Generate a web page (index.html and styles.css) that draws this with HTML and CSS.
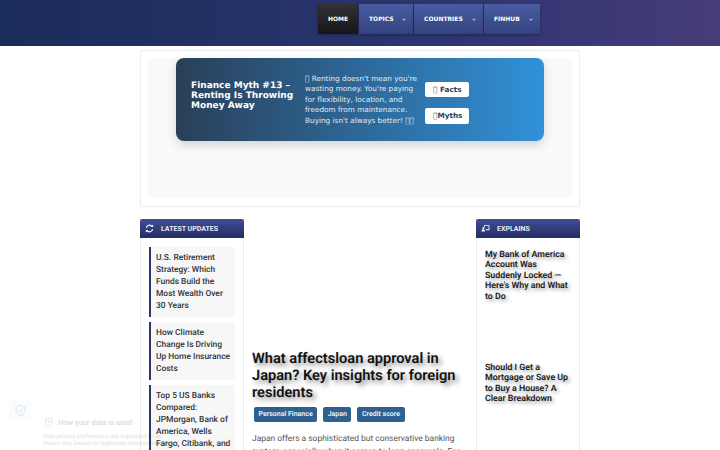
FILE: index.html
```html
<!DOCTYPE html>
<html lang="en">
<head>
  <meta charset="UTF-8">
  <meta name="viewport" content="width=device-width, initial-scale=1.0">
  <title>What affects loan approval in Japan?</title>
  <link rel="stylesheet" href="styles.css">
</head>
<body>
  <header class="site-header">
    <nav class="main-nav">
      <a class="nav-item nav-home" href="#">HOME</a>
      <a class="nav-item nav-topics" href="#">TOPICS <svg class="caret" viewBox="0 0 8 6" fill="none" stroke="#fff" stroke-width="1.600"><path d="M1 1.500l3 3 3-3"/></svg></a>
      <a class="nav-item nav-countries" href="#">COUNTRIES <svg class="caret" viewBox="0 0 8 6" fill="none" stroke="#fff" stroke-width="1.600"><path d="M1 1.500l3 3 3-3"/></svg></a>
      <a class="nav-item nav-finhub" href="#">FINHUB <svg class="caret" viewBox="0 0 8 6" fill="none" stroke="#fff" stroke-width="1.600"><path d="M1 1.500l3 3 3-3"/></svg></a>
    </nav>
  </header>

  <div class="page">
    <section class="ad-box">
      <div class="ad-inner">
        <div class="myth-banner">
          <h2 class="myth-title">Finance Myth #13 – Renting Is Throwing Money Away</h2>
          <p class="myth-text">&#xE000; Renting doesn't mean you're wasting money. You're paying for flexibility, location, and freedom from maintenance. Buying isn't always better! &#xE001;&#xE002;</p>
          <div class="myth-buttons">
            <a class="myth-btn" href="#">&#xE003; Facts</a>
            <a class="myth-btn" href="#">&#xE004;Myths</a>
          </div>
        </div>
      </div>
    </section>

    <div class="columns">
      <aside class="sidebar">
        <div class="side-head">
          <svg class="side-icon" viewBox="0 0 16 16" fill="none" stroke="#fff" stroke-width="2"><path d="M2.500 7a5.500 5.500 0 0 1 10-2.500"/><path d="M13.500 9a5.500 5.500 0 0 1-10 2.500"/><path d="M14.500 1v4.500H10z" fill="#fff" stroke="none"/><path d="M1.500 15v-4.500H6z" fill="#fff" stroke="none"/></svg>
          <span>LATEST UPDATES</span>
        </div>
        <div class="update-list">
          <a class="update-item" href="#">U.S. Retirement Strategy: Which Funds Build the Most Wealth Over 30 Years</a>
          <a class="update-item" href="#">How Climate Change Is Driving Up Home Insurance Costs</a>
          <a class="update-item" href="#">Top 5 US Banks Compared: JPMorgan, Bank of America, Wells Fargo, Citibank, and Goldman Sachs</a>
        </div>
      </aside>

      <main class="article">
        <h1 class="article-title">What affectsloan approval in Japan? Key insights for foreign residents</h1>
        <div class="tags">
          <a class="tag" href="#">Personal Finance</a>
          <a class="tag" href="#">Japan</a>
          <a class="tag" href="#">Credit score</a>
        </div>
        <p class="article-text">Japan offers a sophisticated but conservative banking system, especially when it comes to loan approvals. For foreign residents, the process can feel opaque.</p>
      </main>

      <aside class="sidebar">
        <div class="side-head">
          <svg class="side-icon" viewBox="0 0 16 16" fill="#fff"><path d="M5 2h10v9H8.500v-1.500h5v-6H6.500V6H5z"/><path d="M1 13.500c0-2.500 1-4 3-4s3 1.500 3 4z"/><circle cx="4" cy="7.500" r="1.800"/></svg>
          <span>EXPLAINS</span>
        </div>
        <div class="explain-list">
          <a class="explain-item" href="#">My Bank of America Account Was Suddenly Locked — Here's Why and What to Do</a>
          <a class="explain-item" href="#">Should I Get a Mortgage or Save Up to Buy a House? A Clear Breakdown</a>
        </div>
      </aside>
    </div>
  </div>

  <div class="consent">
    <div class="consent-badge">
      <svg viewBox="0 0 16 16" fill="none" stroke="#8a9bb5" stroke-width="1.400"><path d="M8 1.500l5.500 2v4c0 3.500-2.500 6-5.500 7-3-1-5.500-3.500-5.500-7v-4z"/><path d="M5.500 8l2 2 3-3.500"/></svg>
    </div>
    <div class="consent-title">
      <svg viewBox="0 0 16 16" fill="none" stroke="#7d8590" stroke-width="1.400"><path d="M8 1.500l5.500 2v4c0 3.500-2.500 6-5.500 7-3-1-5.500-3.500-5.500-7v-4z"/><circle cx="8" cy="7" r="1.500"/></svg>
      <span>How your data is used</span>
    </div>
    <p class="consent-text">Your privacy preferences are important to us. Here's why, based on legitimate interest, we use</p>
  </div>
</body>
</html>
```

FILE: styles.css
```css
html, body {
  height: 450px;
  overflow: hidden;
}

body {
  margin: 0;
  background-color: #fff;
  font-family: Roboto, sans-serif;
  color: #333;
  text-rendering: geometricPrecision;
}

a {
  text-decoration: none;
  color: inherit;
}

/* Header */
.site-header {
  height: 46px;
  box-sizing: border-box;
  padding-top: 4px;
  padding-left: 318px;
  background: linear-gradient(90deg, #1a2c5a, #2c3570 60%, #463c7a);
}

.main-nav {
  display: flex;
  gap: 1px;
}

.nav-item {
  display: flex;
  align-items: center;
  justify-content: space-between;
  box-sizing: border-box;
  height: 30px;
  padding: 0 7px 0 10px;
  background: linear-gradient(180deg, #4a5ca0, #33437f);
  box-shadow: 0 1px 3px rgba(0, 0, 0, 0.3);
  color: #fff;
  font-family: "DejaVu Sans", sans-serif;
  font-size: 6px;
  font-weight: 700;
}

.nav-home {
  width: 40px;
  background: linear-gradient(180deg, #333336, #161618);
  justify-content: center;
  padding: 0;
}

.nav-topics {
  width: 54px;
}

.nav-countries {
  width: 69px;
}

.nav-finhub {
  width: 56px;
}

.caret {
  width: 4px;
  height: 3px;
}

/* Page */
.page {
  width: 440px;
  margin: 4px auto 0;
}

.ad-box {
  box-sizing: border-box;
  height: 157px;
  border: 1px solid #ebedf0;
  padding: 7px;
}

.ad-inner {
  height: 140px;
  background-color: #f9f9fa;
  border-radius: 4px;
  padding: 0 28px;
}

.myth-banner {
  display: flex;
  align-items: center;
  box-sizing: border-box;
  height: 83px;
  padding: 0 15px;
  border-radius: 8px;
  background: linear-gradient(90deg, #2a3f58, #3191d8);
  box-shadow: 0 4px 10px rgba(0, 0, 0, 0.15);
  font-family: "DejaVu Sans", sans-serif;
  color: #fff;
}

.myth-title {
  width: 105px;
  flex-shrink: 0;
  margin: 0 9px 8px 0;
  font-size: 9px;
  font-weight: 700;
}

.myth-text {
  width: 112px;
  flex-shrink: 0;
  margin: 1px 8px 0 0;
  font-size: 7.310px;
  line-height: 10.500px;
  color: #e2eaf2;
}

.myth-buttons {
  display: flex;
  flex-direction: column;
  align-items: flex-start;
  gap: 11px;
  margin-top: 6px;
}

.myth-btn {
  display: block;
  box-sizing: border-box;
  height: 15.500px;
  padding: 0 7px 0 8px;
  background-color: #fff;
  border-radius: 2px;
  color: #2c3e50;
  font-size: 7.310px;
  font-weight: 700;
  line-height: 15.500px;
}

/* Columns */
.columns {
  display: grid;
  grid-template-columns: 104px 1fr 104px;
  margin-top: 12px;
}

.sidebar {
  box-sizing: border-box;
  height: 300px;
  border: 1px solid #e9ecf1;
  border-top: none;
}

.side-head {
  display: flex;
  align-items: center;
  gap: 7px;
  height: 19px;
  margin: 0 -1px;
  padding-left: 5px;
  background: linear-gradient(180deg, #3f4f95, #232d66);
  border-radius: 2px 2px 0 0;
  color: #e8ebf5;
  font-size: 7px;
  font-weight: 700;
}

.side-icon {
  width: 9px;
  height: 9px;
  flex-shrink: 0;
}

.update-list {
  display: flex;
  flex-direction: column;
  gap: 5px;
  padding: 9px 8px 0;
}

.update-item {
  display: block;
  padding: 5px 4px 5px 5px;
  border-left: 2px solid #2c3566;
  background-color: #f7f7f8;
  color: #333;
  font-size: 8.440px;
  font-weight: 500;
  line-height: 12px;
}

.explain-list {
  display: flex;
  flex-direction: column;
  gap: 61px;
  padding: 12px 8px 0;
}

.explain-item {
  display: block;
  color: #1a1a1a;
  font-size: 8.800px;
  font-weight: 600;
  line-height: 10.400px;
  text-shadow: 2px 2px 4px rgba(0, 0, 0, 0.4);
}

/* Article */
.article {
  padding: 131px 8px 0;
  min-width: 0;
}

.article-title {
  margin: 0;
  color: #111;
  font-size: 14.600px;
  font-weight: 600;
  line-height: 17px;
  text-shadow: 3px 3px 5px rgba(0, 0, 0, 0.45);
}

.tags {
  display: flex;
  gap: 6px;
  margin: 6px 0 0 2px;
}

.tag {
  height: 15px;
  padding: 0 4.500px;
  background-color: #2f6190;
  border-radius: 2px;
  color: #eef2f7;
  font-size: 7px;
  font-weight: 600;
  line-height: 15px;
}

.article-text {
  margin: 11px 0 0;
  color: #555;
  font-size: 8.440px;
  line-height: 13px;
}

/* Consent popup, fading in */
.consent {
  position: absolute;
  left: 0;
  top: 390px;
  width: 170px;
  height: 60px;
  overflow: hidden;
  opacity: 0.22;
  pointer-events: none;
}

.consent-badge {
  position: absolute;
  left: 9px;
  top: 9px;
  width: 22px;
  height: 22px;
  display: flex;
  align-items: center;
  justify-content: center;
  background-color: #eef3fb;
  border-radius: 5px;
}

.consent-badge svg {
  width: 13px;
  height: 13px;
}

.consent-title {
  position: absolute;
  left: 44px;
  top: 27px;
  display: flex;
  align-items: center;
  gap: 4px;
  color: #555;
  font-size: 7.500px;
  font-weight: 500;
  white-space: nowrap;
}

.consent-title svg {
  width: 10px;
  height: 10px;
}

.consent-text {
  position: absolute;
  left: 43px;
  top: 43px;
  width: 127px;
  margin: 0;
  color: #666;
  font-size: 6px;
  line-height: 7px;
}
```
